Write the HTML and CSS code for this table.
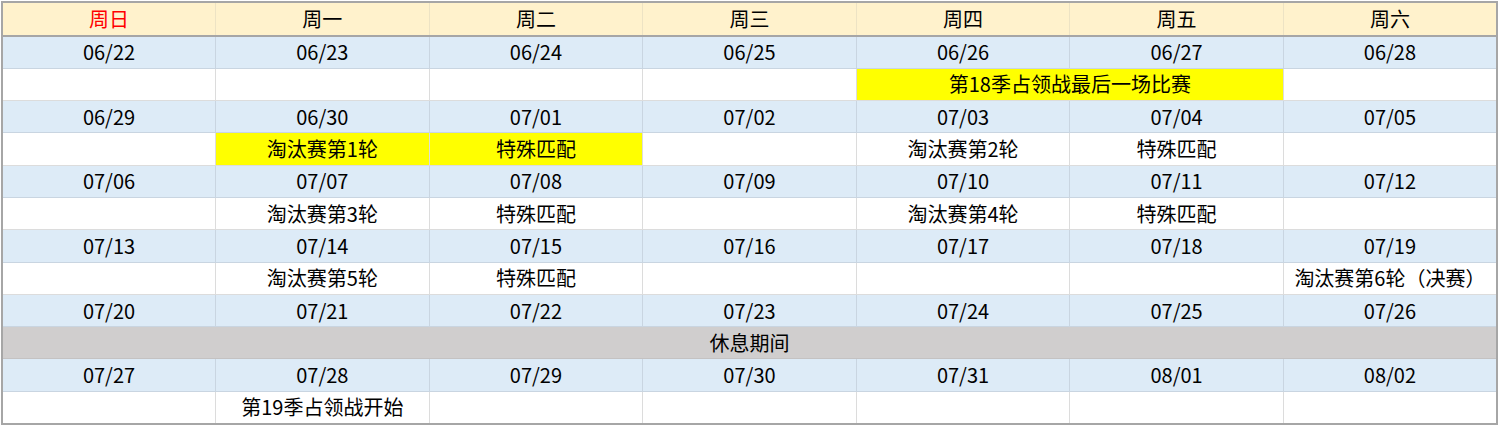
FILE: index.html
```html
<!DOCTYPE html>
<html lang="zh-CN">
<head>
<meta charset="utf-8">
<title>赛程表</title>
<link rel="stylesheet" href="styles.css">
</head>
<body>
<table class="cal">
  <colgroup><col><col><col><col><col><col><col></colgroup>
  <thead>
    <tr class="head">
      <th class="sun">周日</th><th>周一</th><th>周二</th><th>周三</th><th>周四</th><th>周五</th><th>周六</th>
    </tr>
  </thead>
  <tbody>
    <tr class="date"><td>06/22</td><td>06/23</td><td>06/24</td><td>06/25</td><td>06/26</td><td>06/27</td><td>06/28</td></tr>
    <tr class="ev"><td></td><td></td><td></td><td></td><td class="hl" colspan="2">第18季占领战最后一场比赛</td><td></td></tr>
    <tr class="date"><td>06/29</td><td>06/30</td><td>07/01</td><td>07/02</td><td>07/03</td><td>07/04</td><td>07/05</td></tr>
    <tr class="ev"><td></td><td class="hl">淘汰赛第1轮</td><td class="hl">特殊匹配</td><td></td><td>淘汰赛第2轮</td><td>特殊匹配</td><td></td></tr>
    <tr class="date"><td>07/06</td><td>07/07</td><td>07/08</td><td>07/09</td><td>07/10</td><td>07/11</td><td>07/12</td></tr>
    <tr class="ev"><td></td><td>淘汰赛第3轮</td><td>特殊匹配</td><td></td><td>淘汰赛第4轮</td><td>特殊匹配</td><td></td></tr>
    <tr class="date"><td>07/13</td><td>07/14</td><td>07/15</td><td>07/16</td><td>07/17</td><td>07/18</td><td>07/19</td></tr>
    <tr class="ev"><td></td><td>淘汰赛第5轮</td><td>特殊匹配</td><td></td><td></td><td></td><td>淘汰赛第6轮（决赛）</td></tr>
    <tr class="date"><td>07/20</td><td>07/21</td><td>07/22</td><td>07/23</td><td>07/24</td><td>07/25</td><td>07/26</td></tr>
    <tr class="rest"><td colspan="7">休息期间</td></tr>
    <tr class="date"><td>07/27</td><td>07/28</td><td>07/29</td><td>07/30</td><td>07/31</td><td>08/01</td><td>08/02</td></tr>
    <tr class="ev"><td></td><td>第19季占领战开始</td><td></td><td></td><td></td><td></td><td></td></tr>
  </tbody>
</table>
</body>
</html>
```

FILE: styles.css
```css
html, body {
  margin: 0;
  padding: 0;
  background: #ffffff;
}

body {
  padding: 1px 0 0 1px;
  font-family: "Noto Sans CJK SC", "Noto Sans", sans-serif;
  font-size: 20px;
  color: #000000;
}

.cal {
  width: 1497px;
  border-collapse: collapse;
  table-layout: fixed;
  border: 2px solid #a6a6a6;
}

.cal th,
.cal td {
  text-align: center;
  vertical-align: middle;
  padding: 0;
  line-height: 22px;
  border: 1px solid #dcdcdc;
  white-space: nowrap;
  font-weight: normal;
}

.head th {
  height: 31.5px;
  background: #fff2cc;
  border-color: #ede3c4;
  border-bottom: 2px solid #a6a6a6;
}

.head .sun {
  color: #ff0000;
}

.date td {
  height: 31.3px;
  background: #ddebf7;
  border-color: #c9d5e1;
}

.ev td {
  height: 31.3px;
  background: #ffffff;
}

.ev td.hl {
  background: #ffff00;
}

.rest td {
  height: 31.3px;
  background: #d0cece;
  border-color: #c4c2c2;
}
```
